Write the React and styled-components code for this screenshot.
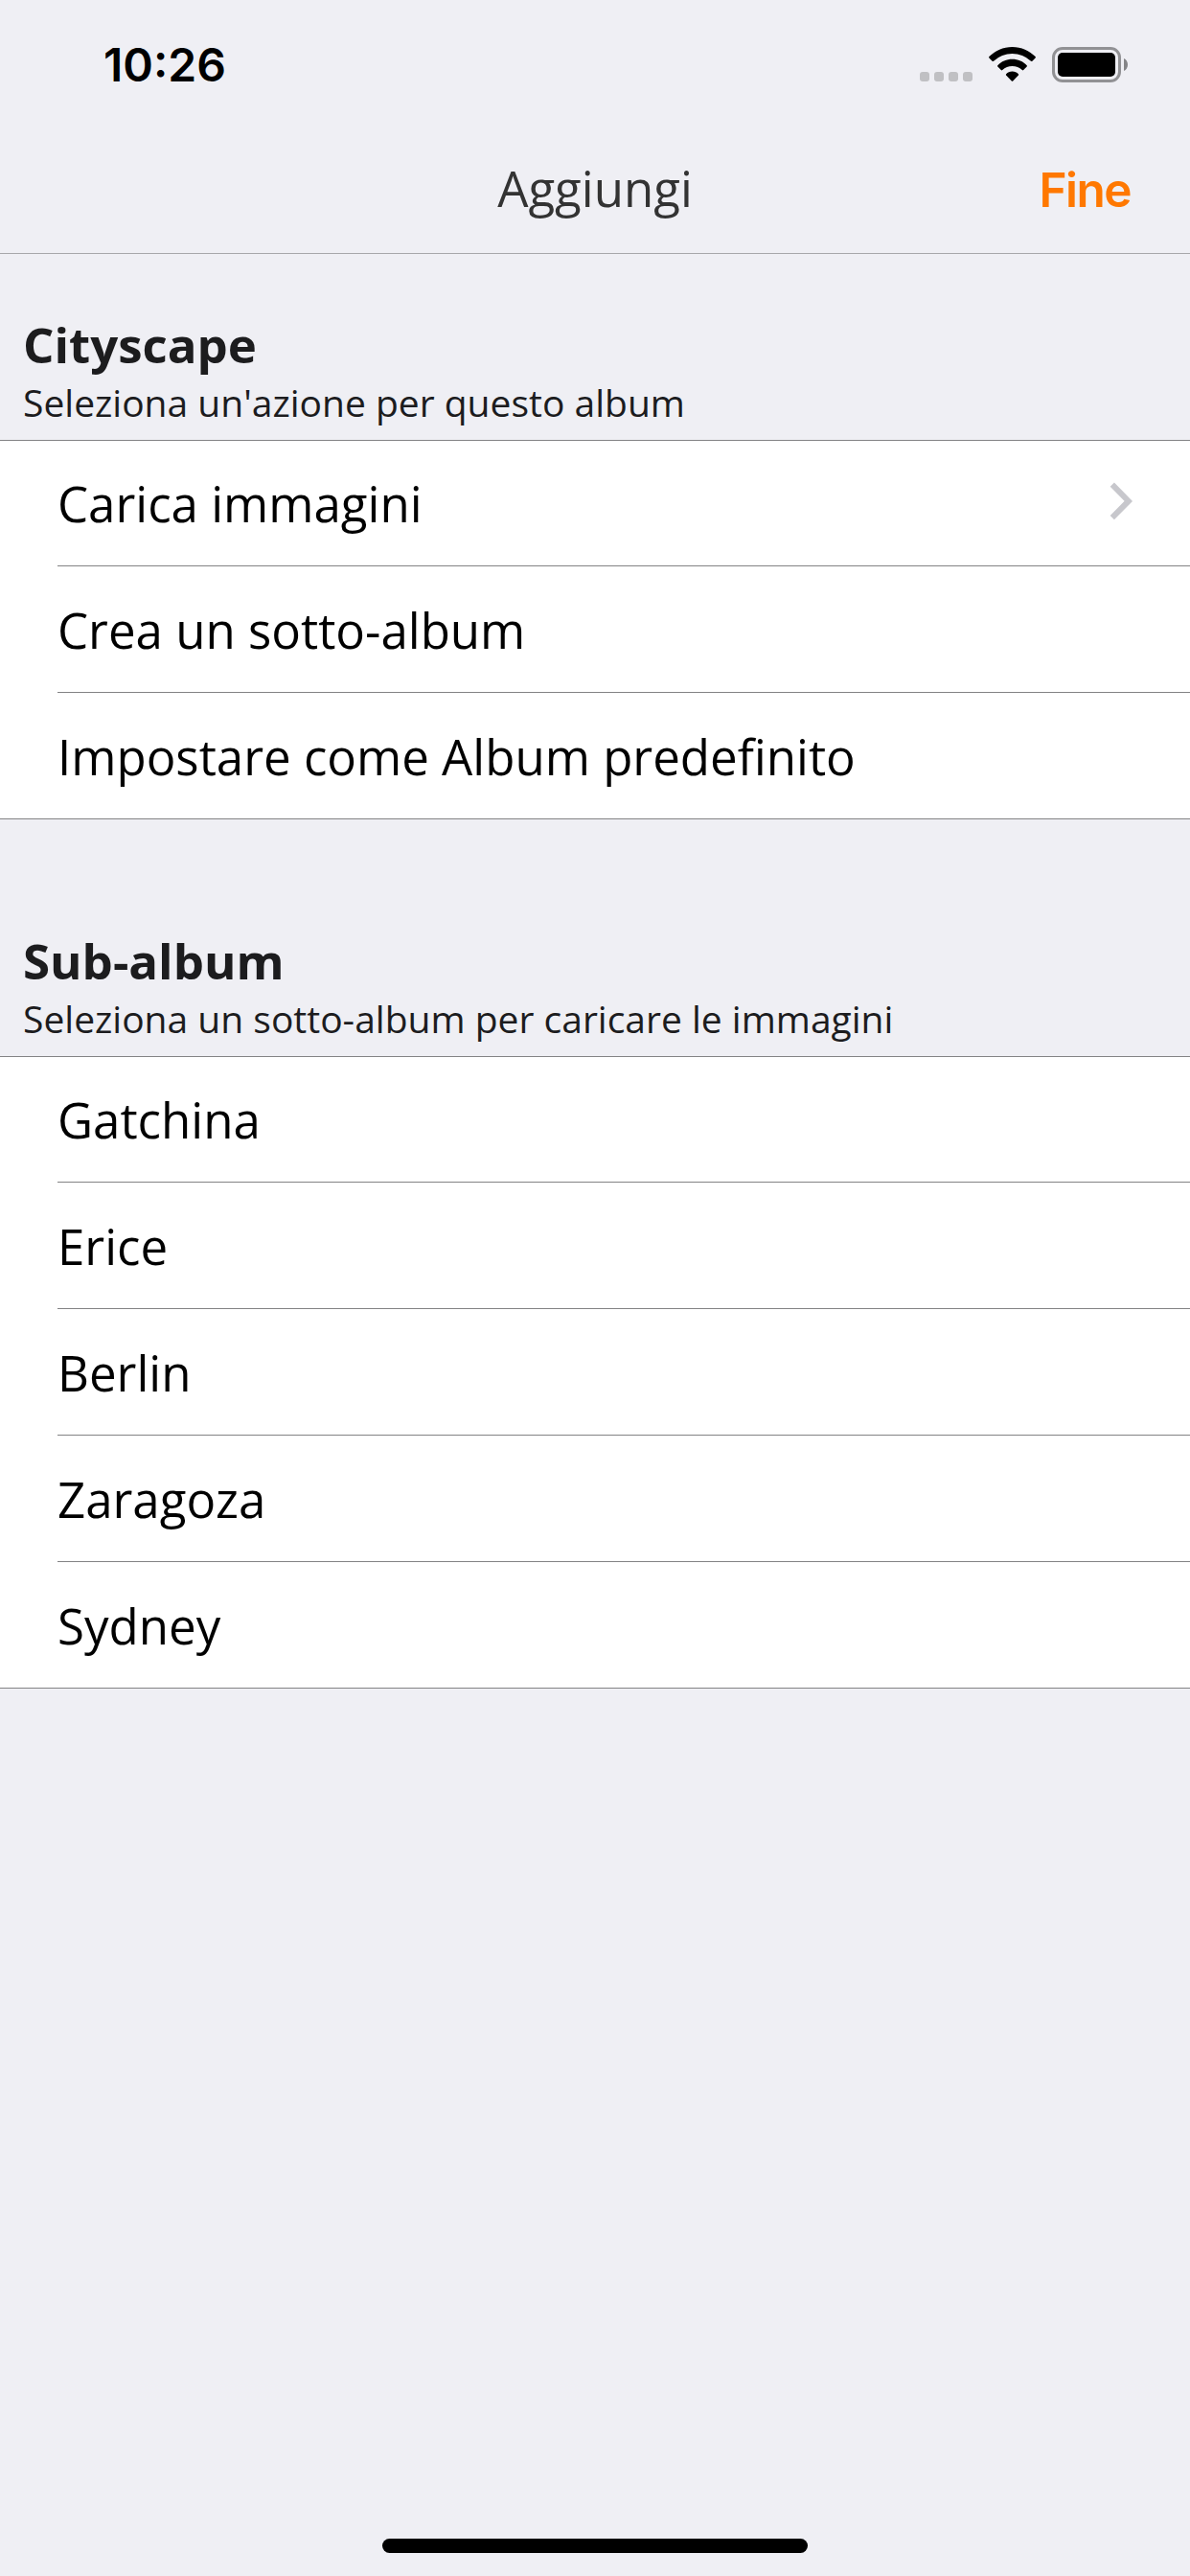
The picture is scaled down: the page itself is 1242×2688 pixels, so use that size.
import React from "react";
import styled, { createGlobalStyle } from "styled-components";

const GlobalStyle = createGlobalStyle`
  *, *::before, *::after { box-sizing: border-box; }
  body {
    margin: 0;
    background: #efeff4;
    font-family: "Open Sans", "Noto Sans", sans-serif;
  }
  h1, h2, p, ul { margin: 0; padding: 0; }
`;

const Screen = styled.div`
  display: flex;
  flex-direction: column;
  width: 1242px;
  height: 2688px;
  background: #efeff4;
  overflow: hidden;
`;

const TopBar = styled.header`
  flex: none;
  height: 265px;
  border-bottom: 1px solid #a7a7aa;
`;

const StatusBar = styled.div`
  display: flex;
  align-items: flex-start;
  justify-content: space-between;
  height: 132px;
  padding: 40px 65px 0 108px;
`;

const Clock = styled.time`
  font: 600 48px/56px Inter, "Liberation Sans", sans-serif;
  color: #000;
`;

const StatusIcons = styled.div`
  display: flex;
  align-items: flex-start;
  padding-top: 9px;
`;

const SignalDots = styled.div`
  display: flex;
  gap: 5px;
  margin: 26px 17px 0 0;
`;

const Dot = styled.span`
  width: 10px;
  height: 10px;
  border-radius: 3px;
  background: #c0c0c3;
`;

const WifiIcon = styled.svg`
  display: block;
  width: 49px;
  height: 37px;
  margin-right: 17px;
`;

const BatteryIcon = styled.svg`
  display: block;
  width: 79px;
  height: 37px;
`;

const NavBar = styled.nav`
  display: grid;
  grid-template-columns: 1fr auto 1fr;
  align-items: start;
  height: 132px;
  padding: 0 60px;
`;

const NavTitle = styled.h1`
  grid-column: 2;
  font-size: 51px;
  font-weight: 400;
  line-height: 128px;
  color: #333;
`;

const DoneButton = styled.button`
  justify-self: end;
  margin: 0 2px 0 0;
  padding: 0;
  border: 0;
  background: none;
  font: 600 49.5px/132px Inter, "Liberation Sans", sans-serif;
  letter-spacing: -1.5px;
  color: #ff7800;
`;

const Section = styled.section`
  flex: none;
`;

const SectionHeader = styled.div`
  padding: ${({ $gap }) => $gap}px 24px 12px;
  color: #1c1c1e;
`;

const SectionTitle = styled.h2`
  font-size: 51px;
  font-weight: 700;
  line-height: 68px;
`;

const SectionNote = styled.p`
  font-size: 39px;
  line-height: 54px;
`;

const List = styled.ul`
  list-style: none;
  background: #fff;
`;

const Row = styled.li`
  padding-left: 60px;

  &:first-child { box-shadow: inset 0 1px #838385; }
  &:last-child { padding: 0; }
  &:last-child > div { padding-left: 60px; }
`;

const RowContent = styled.div`
  display: flex;
  align-items: center;
  justify-content: space-between;
  height: 132px;
  padding-right: 60px;
  border-bottom: 1px solid #838385;
`;

const RowLabel = styled.span`
  height: 132px;
  font-size: 51px;
  line-height: 132px;
  color: #000;
`;

const Chevron = styled.svg`
  display: block;
  width: 24px;
  height: 40px;
  margin-bottom: 3px;
`;

const HomeArea = styled.footer`
  display: flex;
  justify-content: center;
  margin-top: auto;
  padding-bottom: 24px;
`;

const HomeIndicator = styled.div`
  width: 444px;
  height: 15px;
  border-radius: 8px;
  background: #000;
`;

const sections = [
  {
    title: "Cityscape",
    note: "Seleziona un'azione per questo album",
    gap: 60,
    rows: [
      { label: "Carica immagini", disclosure: true },
      { label: "Crea un sotto-album" },
      { label: "Impostare come Album predefinito" },
    ],
  },
  {
    title: "Sub-album",
    note: "Seleziona un sotto-album per caricare le immagini",
    gap: 113,
    rows: [
      { label: "Gatchina" },
      { label: "Erice" },
      { label: "Berlin" },
      { label: "Zaragoza" },
      { label: "Sydney" },
    ],
  },
];

function AlbumSection({ title, note, gap, rows }) {
  return (
    <Section>
      <SectionHeader $gap={gap}>
        <SectionTitle>{title}</SectionTitle>
        <SectionNote>{note}</SectionNote>
      </SectionHeader>
      <List>
        {rows.map((row) => (
          <Row key={row.label}>
            <RowContent>
              <RowLabel>{row.label}</RowLabel>
              {row.disclosure && (
                <Chevron viewBox="0 0 24 40" fill="none" aria-hidden="true">
                  <path d="M2.8 2.6 19.8 19.9 2.8 37.2" stroke="#c7c7cc" strokeWidth="6" />
                </Chevron>
              )}
            </RowContent>
          </Row>
        ))}
      </List>
    </Section>
  );
}

export default function App() {
  return (
    <>
      <GlobalStyle />
      <Screen>
        <TopBar>
          <StatusBar>
            <Clock>10:26</Clock>
            <StatusIcons>
              <SignalDots>
                <Dot />
                <Dot />
                <Dot />
                <Dot />
              </SignalDots>
              <WifiIcon viewBox="0 0 49 37" aria-hidden="true">
                <path d="M24.5 0C34 0 42.500 3.900 48.600 10.100Q49.200 10.800 48.600 11.500L45.400 14.800Q44.700 15.400 44 14.800A28.400 28.400 0 0 0 5 14.800Q4.300 15.400 3.600 14.800L.4 11.500Q-.2 10.800 .4 10.100C6.500 3.900 15 0 24.500 0Z" />
                <path d="M24.500 12.800C30.600 12.800 35.800 15.200 39.700 19.200Q40.300 19.900 39.700 20.600L36.200 24.100Q35.500 24.700 34.800 24.100A15 15 0 0 0 14.200 24.100Q13.500 24.700 12.800 24.100L9.300 20.600Q8.700 19.900 9.300 19.200C13.200 15.200 18.400 12.800 24.500 12.800Z" />
                <path d="M24.500 25.600C27.100 25.600 29.200 26.600 30.900 28.200Q31.500 28.900 30.900 29.600L25.200 35.400Q24.500 36 23.800 35.400L18.100 29.600Q17.500 28.900 18.100 28.200C19.800 26.600 21.900 25.600 24.500 25.600Z" />
              </WifiIcon>
              <BatteryIcon viewBox="0 0 79 37" aria-hidden="true">
                <rect x="1.500" y="1.500" width="69" height="34" rx="9.500" fill="none" stroke="#919194" strokeWidth="3" />
                <rect x="6" y="6" width="60" height="25" rx="5" />
                <path d="M75 12V25C77.500 24 79 21.400 79 18.500S77.500 13 75 12Z" fill="#848487" />
              </BatteryIcon>
            </StatusIcons>
          </StatusBar>
          <NavBar>
            <NavTitle>Aggiungi</NavTitle>
            <DoneButton type="button">Fine</DoneButton>
          </NavBar>
        </TopBar>
        <main>
          {sections.map((section) => (
            <AlbumSection key={section.title} {...section} />
          ))}
        </main>
        <HomeArea>
          <HomeIndicator />
        </HomeArea>
      </Screen>
    </>
  );
}
